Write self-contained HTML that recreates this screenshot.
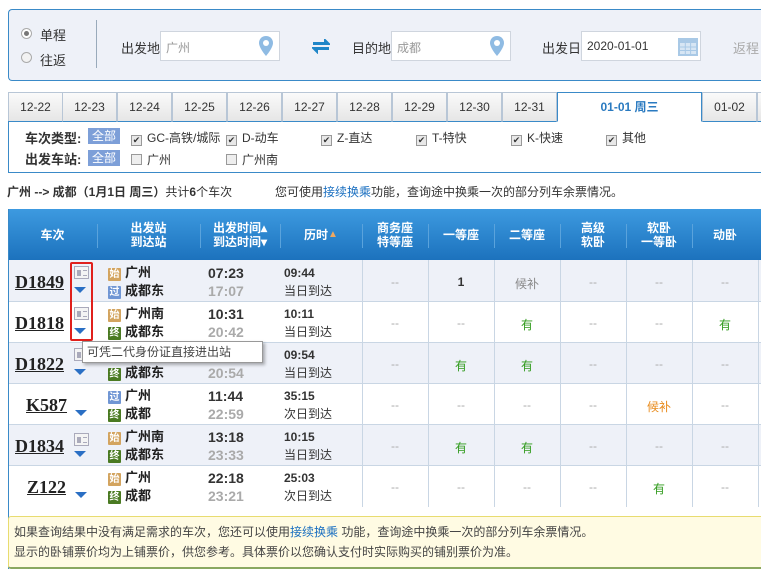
<!DOCTYPE html>
<html><head><meta charset="utf-8"><style>
*{margin:0;padding:0;box-sizing:border-box}
html,body{width:761px;height:578px;overflow:hidden}
body{background:#fff;font-family:"Liberation Sans","Noto Sans CJK SC",sans-serif;font-size:12px;color:#333;position:relative;white-space:nowrap}
.a{position:absolute}
.top{left:8px;top:9px;width:753px;height:72px;background:#eef1f8;border:1px solid #3a8ac8;border-right:none;border-radius:4px 0 0 4px}
.inp{position:absolute;height:30px;width:120px;background:#fff;border:1px solid #cfd5de;font-size:12px;color:#999;padding:7px 5px;top:31px}
.tab{position:absolute;top:92px;height:30px;width:55px;border:1px solid #b8c6d6;border-bottom:1px solid #3a8ac8;background:linear-gradient(#fafafa,#e6e6e6);text-align:center;line-height:28px;font-size:12px;color:#333}
.cb{display:inline-block;width:11px;height:11px;border:1px solid #999;background:#e8e8e8;vertical-align:-1px;margin-right:5px;font-size:9px;line-height:9px;text-align:center;color:#333}
.badge{position:absolute;background:#7d9fd8;color:#fff;padding:0 4px;height:16px;line-height:16px;font-size:12px}
.th{position:absolute;top:209px;height:51px;color:#fff;font-weight:bold;font-size:12px;text-align:center;line-height:14px;display:flex;align-items:center;justify-content:center}
.row{position:absolute;left:8px;width:753px;border-bottom:1px solid #c9d6e4}
.cell{position:absolute;text-align:center;font-size:12px}
.vl{position:absolute;width:1px;background:#c9d6e4}
.tn{position:absolute;font-family:"Liberation Serif",serif;font-weight:bold;font-size:18px;text-decoration:underline;color:#222}
.tag{display:inline-block;width:13px;height:13px;font-size:10px;line-height:13px;text-align:center;color:#fff;margin-right:4px;vertical-align:0px;border-radius:1px}
.s{background:#d3a45f}.g{background:#7096d4}.z{background:#4a7a22}
.st{position:absolute;left:108px;font-weight:bold;font-size:13px;line-height:18px;color:#222}
.tm{position:absolute;left:208px;font-weight:bold;font-size:14px;line-height:18px;font-family:"Liberation Sans",sans-serif;color:#333}
.du{position:absolute;left:284px;font-size:12px;line-height:18px}
.arr{position:absolute;width:0;height:0;border-left:6px solid transparent;border-right:6px solid transparent;border-top:6px solid #2a6fc4}
.id{position:absolute;width:15px;height:13px;border:1px solid #aab;background:#f4f4f4}
.id:before{content:"";position:absolute;left:2px;top:3px;width:4px;height:6px;background:#aab}
.id:after{content:"";position:absolute;left:8px;top:3px;width:4px;height:4px;border-top:1px solid #aab;border-bottom:1px solid #aab}
.y{color:#2e9a1a}.d{color:#aaa}
</style></head><body>
<div class="a top"></div>
<div class="a" style="left:21px;top:28px;width:11px;height:11px;border-radius:50%;border:1px solid #aaa;background:#fff"><div style="margin:2px;width:5px;height:5px;border-radius:50%;background:#777"></div></div>
<div class="a" style="left:40px;top:25px;font-size:13px">单程</div>
<div class="a" style="left:21px;top:52px;width:11px;height:11px;border-radius:50%;border:1px solid #aaa;background:#f2f2f2"></div>
<div class="a" style="left:40px;top:50px;font-size:13px">往返</div>
<div class="a" style="left:96px;top:20px;width:1px;height:48px;background:#9ab"></div>
<div class="a" style="left:121px;top:38px;font-size:13px">出发地</div>
<div class="inp" style="left:160px">广州</div>
<svg class="a" style="left:259px;top:36px" width="14" height="20" viewBox="0 0 14 20"><path d="M7 0C3 0 0 3 0 7c0 5 7 13 7 13s7-8 7-13C14 3 11 0 7 0z" fill="#8fbbe3"/><circle cx="7" cy="7" r="3" fill="#fff"/></svg>
<svg class="a" style="left:312px;top:39px" width="18" height="15" viewBox="0 0 18 15"><path d="M2 4h11V1l4 4-4 0H2z M16 10H5v3l-4-4 4 0h11z" fill="#1f86c8" stroke="#1f86c8" stroke-width="2"/></svg>
<div class="a" style="left:352px;top:38px;font-size:13px">目的地</div>
<div class="inp" style="left:391px">成都</div>
<svg class="a" style="left:490px;top:36px" width="14" height="20" viewBox="0 0 14 20"><path d="M7 0C3 0 0 3 0 7c0 5 7 13 7 13s7-8 7-13C14 3 11 0 7 0z" fill="#8fbbe3"/><circle cx="7" cy="7" r="3" fill="#fff"/></svg>
<div class="a" style="left:542px;top:38px;font-size:13px">出发日</div>
<div class="inp" style="left:581px;color:#333">2020-01-01</div>
<svg class="a" style="left:678px;top:36px" width="20" height="20" viewBox="0 0 20 20"><rect x="0" y="2" width="20" height="18" fill="#a9c9e6"/><rect x="2" y="7" width="16" height="11" fill="#d7e6f4"/><path d="M2 11h16M2 14.5h16M7.3 7v11M12.6 7v11" stroke="#a9c9e6"/></svg>
<div class="a" style="left:733px;top:38px;font-size:13px;color:#aaa">返程日</div>

<div class="tab" style="left:8px">12-22</div>
<div class="tab" style="left:62px">12-23</div>
<div class="tab" style="left:117px">12-24</div>
<div class="tab" style="left:172px">12-25</div>
<div class="tab" style="left:227px">12-26</div>
<div class="tab" style="left:282px">12-27</div>
<div class="tab" style="left:337px">12-28</div>
<div class="tab" style="left:392px">12-29</div>
<div class="tab" style="left:447px">12-30</div>
<div class="tab" style="left:502px">12-31</div>
<div class="tab" style="left:557px;width:145px;background:#fff;border-color:#3a8ac8;border-bottom-color:#fff;color:#2a7ac0;font-weight:bold">01-01 周三</div>
<div class="tab" style="left:702px">01-02</div>
<div class="tab" style="left:757px;width:4px;border-right:none"></div>
<div class="a" style="left:8px;top:121px;width:753px;height:52px;border:1px solid #3a8ac8;border-top:none;border-right:none"></div>
<div class="a" style="left:25px;top:128px;font-weight:bold;font-size:13px">车次类型:</div>
<div class="badge" style="left:88px;top:128px">全部</div>
<div class="a" style="left:131px;top:129px;font-size:12px"><span class="cb">✔</span>GC-高铁/城际</div>
<div class="a" style="left:226px;top:129px"><span class="cb">✔</span>D-动车</div>
<div class="a" style="left:321px;top:129px"><span class="cb">✔</span>Z-直达</div>
<div class="a" style="left:416px;top:129px"><span class="cb">✔</span>T-特快</div>
<div class="a" style="left:511px;top:129px"><span class="cb">✔</span>K-快速</div>
<div class="a" style="left:606px;top:129px"><span class="cb">✔</span>其他</div>
<div class="a" style="left:25px;top:149px;font-weight:bold;font-size:13px">出发车站:</div>
<div class="badge" style="left:88px;top:150px">全部</div>
<div class="a" style="left:131px;top:151px"><span class="cb" style="background:#eee"></span>广州</div>
<div class="a" style="left:226px;top:151px"><span class="cb" style="background:#eee"></span>广州南</div>
<div class="a" style="left:7px;top:183px;font-size:12px"><b>广州 --&gt; 成都（1月1日 周三）</b>共计<b>6</b>个车次</div>
<div class="a" style="left:275px;top:183px">您可使用<span style="color:#1a6fc0">接续换乘</span>功能，查询途中换乘一次的部分列车余票情况。</div>

<div class="a" style="left:8px;top:209px;width:753px;height:51px;background:linear-gradient(#3d9ae0,#1c72bd)"></div>
<div class="th" style="left:8px;width:89px">车次</div>
<div class="th" style="left:97px;width:103px">出发站<br>到达站</div>
<div class="th" style="left:200px;width:80px">出发时间▴<br>到达时间▾</div>
<div class="th" style="left:280px;width:82px">历时<span style="color:#f0a860;font-size:10px">▲</span></div>
<div class="th" style="left:362px;width:66px">商务座<br>特等座</div>
<div class="th" style="left:428px;width:66px">一等座</div>
<div class="th" style="left:494px;width:66px">二等座</div>
<div class="th" style="left:560px;width:66px">高级<br>软卧</div>
<div class="th" style="left:626px;width:66px">软卧<br>一等卧</div>
<div class="th" style="left:692px;width:66px">动卧</div>

<div class="row" style="top:260px;height:42px;background:#eef1f8"></div>
<div class="row" style="top:302px;height:41px;background:#fff"></div>
<div class="row" style="top:343px;height:41px;background:#eef1f8"></div>
<div class="row" style="top:384px;height:41px;background:#fff"></div>
<div class="row" style="top:425px;height:41px;background:#eef1f8"></div>
<div class="row" style="top:466px;height:41px;background:#fff;border-bottom:none"></div>
<div class="a" style="left:8px;top:209px;width:1px;height:360px;background:#3a8ac8"></div>
<div class="vl" style="left:362px;top:260px;height:247px"></div>
<div class="vl" style="left:428px;top:260px;height:247px"></div>
<div class="vl" style="left:494px;top:260px;height:247px"></div>
<div class="vl" style="left:560px;top:260px;height:247px"></div>
<div class="vl" style="left:626px;top:260px;height:247px"></div>
<div class="vl" style="left:692px;top:260px;height:247px"></div>
<div class="vl" style="left:758px;top:260px;height:247px"></div>
<div class="a" style="left:97px;top:224px;width:1px;height:24px;background:#5aa3dc"></div>
<div class="a" style="left:200px;top:224px;width:1px;height:24px;background:#5aa3dc"></div>
<div class="a" style="left:280px;top:224px;width:1px;height:24px;background:#5aa3dc"></div>
<div class="a" style="left:362px;top:224px;width:1px;height:24px;background:#5aa3dc"></div>
<div class="a" style="left:428px;top:224px;width:1px;height:24px;background:#5aa3dc"></div>
<div class="a" style="left:494px;top:224px;width:1px;height:24px;background:#5aa3dc"></div>
<div class="a" style="left:560px;top:224px;width:1px;height:24px;background:#5aa3dc"></div>
<div class="a" style="left:626px;top:224px;width:1px;height:24px;background:#5aa3dc"></div>
<div class="a" style="left:692px;top:224px;width:1px;height:24px;background:#5aa3dc"></div>

<div class="tn" style="left:15px;top:272px">D1849</div>
<div class="id" style="left:74px;top:266px"></div><div class="arr" style="left:74px;top:287px"></div>
<div class="st" style="top:264px"><span class="tag s">始</span>广州</div>
<div class="st" style="top:282px"><span class="tag g">过</span>成都东</div>
<div class="tm" style="top:264px">07:23</div><div class="tm d" style="top:282px">17:07</div>
<div class="du" style="top:264px;font-weight:bold">09:44</div><div class="du" style="top:282px">当日到达</div>

<div class="tn" style="left:15px;top:313px">D1818</div>
<div class="id" style="left:74px;top:307px"></div><div class="arr" style="left:74px;top:328px"></div>
<div class="st" style="top:305px"><span class="tag s">始</span>广州南</div>
<div class="st" style="top:323px"><span class="tag z">终</span>成都东</div>
<div class="tm" style="top:305px">10:31</div><div class="tm d" style="top:323px">20:42</div>
<div class="du" style="top:305px;font-weight:bold">10:11</div><div class="du" style="top:323px">当日到达</div>

<div class="tn" style="left:15px;top:354px">D1822</div>
<div class="id" style="left:74px;top:348px"></div><div class="arr" style="left:74px;top:369px"></div>
<div class="st" style="top:346px"><span class="tag s">始</span>广州南</div>
<div class="st" style="top:364px"><span class="tag z">终</span>成都东</div>
<div class="tm" style="top:346px">07:00</div><div class="tm d" style="top:364px">20:54</div>
<div class="du" style="top:346px;font-weight:bold">09:54</div><div class="du" style="top:364px">当日到达</div>

<div class="tn" style="left:26px;top:395px">K587</div>
<div class="arr" style="left:75px;top:410px"></div>
<div class="st" style="top:387px"><span class="tag g">过</span>广州</div>
<div class="st" style="top:405px"><span class="tag z">终</span>成都</div>
<div class="tm" style="top:387px">11:44</div><div class="tm d" style="top:405px">22:59</div>
<div class="du" style="top:387px;font-weight:bold">35:15</div><div class="du" style="top:405px">次日到达</div>

<div class="tn" style="left:15px;top:436px">D1834</div>
<div class="id" style="left:74px;top:433px"></div><div class="arr" style="left:74px;top:451px"></div>
<div class="st" style="top:428px"><span class="tag s">始</span>广州南</div>
<div class="st" style="top:446px"><span class="tag z">终</span>成都东</div>
<div class="tm" style="top:428px">13:18</div><div class="tm d" style="top:446px">23:33</div>
<div class="du" style="top:428px;font-weight:bold">10:15</div><div class="du" style="top:446px">当日到达</div>

<div class="tn" style="left:27px;top:477px">Z122</div>
<div class="arr" style="left:75px;top:492px"></div>
<div class="st" style="top:469px"><span class="tag s">始</span>广州</div>
<div class="st" style="top:487px"><span class="tag z">终</span>成都</div>
<div class="tm" style="top:469px">22:18</div><div class="tm d" style="top:487px">23:21</div>
<div class="du" style="top:469px;font-weight:bold">25:03</div><div class="du" style="top:487px">次日到达</div>

<div class="cell d" style="left:362px;top:275px;width:66px">--</div>
<div class="cell" style="left:428px;top:275px;width:66px;font-weight:bold">1</div>
<div class="cell" style="left:494px;top:275px;width:66px;color:#888">候补</div>
<div class="cell d" style="left:560px;top:275px;width:66px">--</div>
<div class="cell d" style="left:626px;top:275px;width:66px">--</div>
<div class="cell d" style="left:692px;top:275px;width:66px">--</div>

<div class="cell d" style="left:362px;top:316px;width:66px">--</div>
<div class="cell d" style="left:428px;top:316px;width:66px">--</div>
<div class="cell y" style="left:494px;top:316px;width:66px">有</div>
<div class="cell d" style="left:560px;top:316px;width:66px">--</div>
<div class="cell d" style="left:626px;top:316px;width:66px">--</div>
<div class="cell y" style="left:692px;top:316px;width:66px">有</div>

<div class="cell d" style="left:362px;top:357px;width:66px">--</div>
<div class="cell y" style="left:428px;top:357px;width:66px">有</div>
<div class="cell y" style="left:494px;top:357px;width:66px">有</div>
<div class="cell d" style="left:560px;top:357px;width:66px">--</div>
<div class="cell d" style="left:626px;top:357px;width:66px">--</div>
<div class="cell d" style="left:692px;top:357px;width:66px">--</div>

<div class="cell d" style="left:362px;top:398px;width:66px">--</div>
<div class="cell d" style="left:428px;top:398px;width:66px">--</div>
<div class="cell d" style="left:494px;top:398px;width:66px">--</div>
<div class="cell d" style="left:560px;top:398px;width:66px">--</div>
<div class="cell" style="left:626px;top:398px;width:66px;color:#e88a1a">候补</div>
<div class="cell d" style="left:692px;top:398px;width:66px">--</div>

<div class="cell d" style="left:362px;top:439px;width:66px">--</div>
<div class="cell y" style="left:428px;top:439px;width:66px">有</div>
<div class="cell y" style="left:494px;top:439px;width:66px">有</div>
<div class="cell d" style="left:560px;top:439px;width:66px">--</div>
<div class="cell d" style="left:626px;top:439px;width:66px">--</div>
<div class="cell d" style="left:692px;top:439px;width:66px">--</div>

<div class="cell d" style="left:362px;top:480px;width:66px">--</div>
<div class="cell d" style="left:428px;top:480px;width:66px">--</div>
<div class="cell d" style="left:494px;top:480px;width:66px">--</div>
<div class="cell d" style="left:560px;top:480px;width:66px">--</div>
<div class="cell y" style="left:626px;top:480px;width:66px">有</div>
<div class="cell d" style="left:692px;top:480px;width:66px">--</div>

<div class="a" style="left:70px;top:262px;width:23px;height:79px;border:2px solid #e0201c;border-radius:2px"></div>
<div class="a" style="left:82px;top:341px;width:181px;height:22px;background:#fff;border:1px solid #999;box-shadow:2px 2px 3px rgba(0,0,0,.3);font-size:12px;line-height:20px;padding-left:4px;color:#444">可凭二代身份证直接进出站</div>

<div class="a" style="left:8px;top:516px;width:753px;height:53px;background:#fffbe3;border:1px solid #e8dc70;border-right:none;border-bottom:2px solid #8aa860;border-radius:3px 0 0 3px;font-size:12px;line-height:20px;padding:5px 5px;color:#444">如果查询结果中没有满足需求的车次，您还可以使用<span style="color:#1a6fc0">接续换乘</span> 功能，查询途中换乘一次的部分列车余票情况。<br>显示的卧铺票价均为上铺票价，供您参考。具体票价以您确认支付时实际购买的铺别票价为准。</div>
</body></html>
